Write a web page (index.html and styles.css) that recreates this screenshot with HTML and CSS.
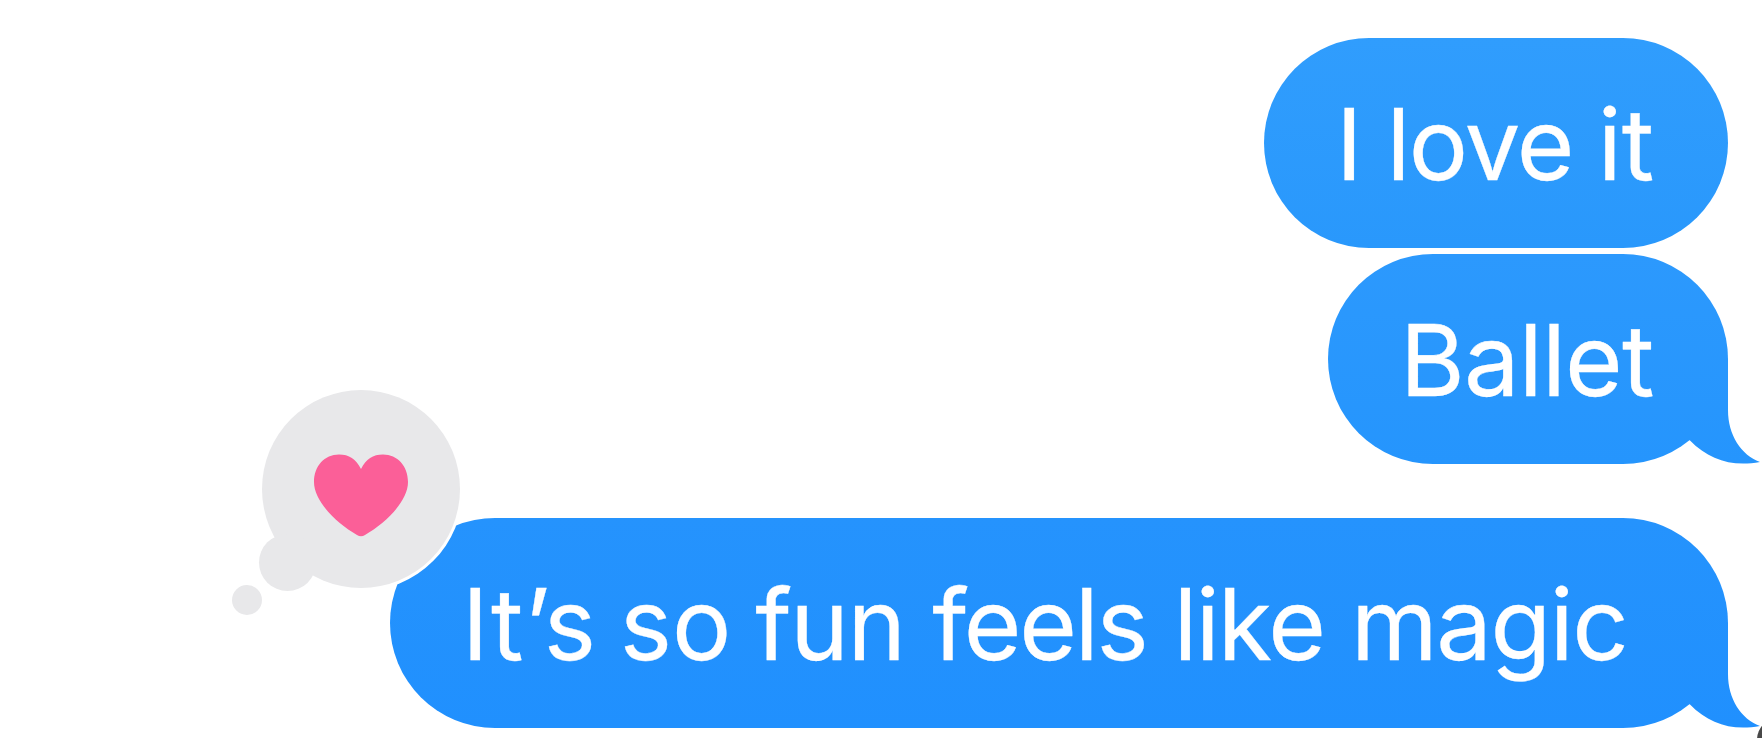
FILE: index.html
```html
<!DOCTYPE html>
<html lang="en">
<head>
<meta charset="utf-8">
<title>Messages</title>
<link rel="stylesheet" href="styles.css">
</head>
<body>
<main class="thread">
  <div class="bubble bubble-love"><p class="text">I <span class="w-love">love</span> <span class="w-it">it</span></p></div>
  <div class="bubble bubble-ballet">
    <p class="text"><span class="w-ballet">Ballet</span></p>
    <svg class="tail" viewBox="0 0 90 210" aria-hidden="true">
      <defs><linearGradient id="tone-a" gradientUnits="userSpaceOnUse" x1="0" y1="0" x2="0" y2="210"><stop offset="0" stop-color="#2c99fd"/><stop offset="1" stop-color="#2595fd"/></linearGradient></defs>
      <path fill="url(#tone-a)" d="M30 105H56V156C56 181 69 201 88 208C60 213 37 206 18 186.500L10 180Z"/>
    </svg>
  </div>
  <div class="bubble bubble-magic">
    <p class="text"><span class="w-its">It’s</span> <span class="w-so">so</span> <span class="w-fun">fun</span> <span class="w-feels">feels</span> <span class="w-like">like</span> <span class="w-magic">magic</span></p>
    <svg class="tail" viewBox="0 0 90 210" aria-hidden="true">
      <defs><linearGradient id="tone-b" gradientUnits="userSpaceOnUse" x1="0" y1="0" x2="0" y2="210"><stop offset="0" stop-color="#2593fd"/><stop offset="1" stop-color="#2090fe"/></linearGradient></defs>
      <path fill="url(#tone-b)" d="M30 105H56V156C56 181 69 201 88 208C60 213 37 206 18 186.500L10 180Z"/>
    </svg>
    <svg class="reaction" viewBox="0 0 240 240" aria-label="Loved">
      <circle cx="131" cy="109" r="102" fill="#fff"/>
      <g fill="#e8e8ea">
        <circle cx="131" cy="109" r="99"/>
        <circle cx="57.500" cy="182.500" r="28.500"/>
        <circle cx="17" cy="220" r="15"/>
      </g>
      <path fill="#fb5f98" d="M131 89C126 79 119 74.500 109 74.500C94.500 74.500 84 86 84 102C84 121 106 143 127 155Q131 157.500 135 155C156 143 178 121 178 102C178 86 167.500 74.500 153 74.500C143 74.500 136 79 131 89Z"/>
    </svg>
  </div>
  <span class="corner-dot"></span>
</main>
</body>
</html>
```
FILE: styles.css
```css
* { box-sizing: border-box; }
body { margin: 0; background: #fff; overflow: hidden; }
.thread {
  position: relative;
  width: 1762px;
  height: 738px;
  padding: 38px 34px 0 0;
  display: flex;
  flex-direction: column;
  align-items: flex-end;
  overflow: hidden;
}
.bubble {
  position: relative;
  flex: none;
  height: 210px;
  border-radius: 105px;
}
.bubble-love { width: 464px; padding-left: 72px; background: linear-gradient(#309dfd, #2998fc); }
.bubble-ballet { width: 400px; margin-top: 6px; padding-left: 72px; background: linear-gradient(#2c99fd, #2595fd); }
.bubble-magic { width: 1338px; margin-top: 54px; padding-left: 72px; background: linear-gradient(#2593fd, #2090fe); }
.text {
  margin: 0;
  color: #fff;
  font: 400 99px/212px Inter, "Liberation Sans", sans-serif;
  -webkit-text-stroke: 0.3px #fff;
  white-space: nowrap;
}
.w-love { margin-left: -4px; letter-spacing: -1.6px; }
.w-it { margin-left: -3px; }
.w-ballet { letter-spacing: -0.8px; }
.w-its { letter-spacing: 1px; }
.w-so { margin-left: -5px; }
.w-fun { margin-left: -4px; letter-spacing: -1.5px; }
.w-feels { margin-left: 0; letter-spacing: -2.2px; }
.w-like { margin-left: -1px; letter-spacing: -1.8px; }
.w-magic { margin-left: -1px; letter-spacing: -1.4px; }
.tail { position: absolute; right: -34px; top: 0; width: 90px; height: 210px; }
.reaction { position: absolute; left: -160px; top: -138px; width: 240px; height: 240px; }
.corner-dot {
  position: absolute;
  left: 1757px;
  top: 717px;
  width: 46px;
  height: 46px;
  border-radius: 50%;
  background: #484848;
}
```
